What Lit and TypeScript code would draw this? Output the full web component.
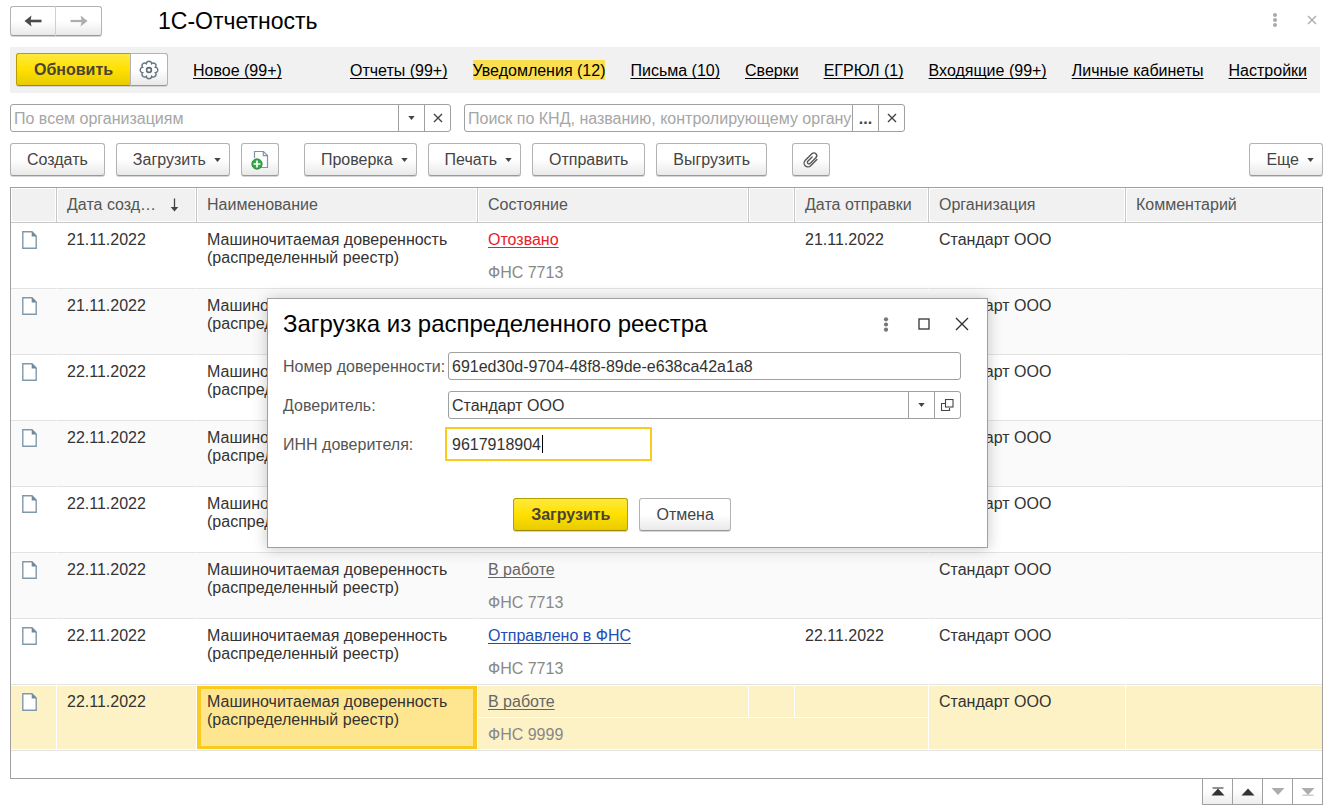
import { LitElement, html, svg, css, nothing } from "lit";
import { customElement, state } from "lit/decorators.js";
import { classMap } from "lit/directives/class-map.js";

type Tone = "revoked" | "working" | "sent";

interface Notice {
  created: string;
  name: string;
  status: string;
  tone: Tone;
  office: string;
  sent: string;
  company: string;
}

const NAME = "Машиночитаемая доверенность (распределенный реестр)";
const notice = (created: string, status: string, tone: Tone, office: string, sent = ""): Notice => ({
  created,
  name: NAME,
  status,
  tone,
  office,
  sent,
  company: "Стандарт ООО",
});

const NOTICES: Notice[] = [
  notice("21.11.2022", "Отозвано", "revoked", "ФНС 7713", "21.11.2022"),
  notice("21.11.2022", "В работе", "working", "ФНС 7713"),
  notice("22.11.2022", "В работе", "working", "ФНС 7713"),
  notice("22.11.2022", "В работе", "working", "ФНС 7713"),
  notice("22.11.2022", "В работе", "working", "ФНС 7713"),
  notice("22.11.2022", "В работе", "working", "ФНС 7713"),
  notice("22.11.2022", "Отправлено в ФНС", "sent", "ФНС 7713", "22.11.2022"),
  notice("22.11.2022", "В работе", "working", "ФНС 9999"),
];

const SECTIONS = [
  "Отчеты (99+)",
  "Уведомления (12)",
  "Письма (10)",
  "Сверки",
  "ЕГРЮЛ (1)",
  "Входящие (99+)",
  "Личные кабинеты",
  "Настройки",
];

/* Outline of the settings flower: eight round petals about a centre. */
const petals = (() => {
  const at = (i: number) => {
    const a = ((i * 45 + 22.5) * Math.PI) / 180;
    return `${(10 + 6.9 * Math.cos(a)).toFixed(2)} ${(10 + 6.9 * Math.sin(a)).toFixed(2)}`;
  };
  let d = `M${at(0)}`;
  for (let i = 1; i <= 8; i++) d += `A2.65 2.65 0 0 1 ${at(i)}`;
  return d + "Z";
})();

const icon = (w: number, h: number, body: unknown) =>
  html`<svg width=${w} height=${h} viewBox="0 0 ${w} ${h}" fill="none" aria-hidden="true">${body}</svg>`;

const icons = {
  back: icon(18, 12, svg`<path d="M17.5 6H3" stroke="#4a4a4a" stroke-width="2.6"/><path d="M0.5 6L7.5 0.5L6.5 6L7.5 11.5Z" fill="#4a4a4a"/>`),
  forward: icon(18, 12, svg`<path d="M0.5 6H15" stroke="#adadad" stroke-width="2.2"/><path d="M17.5 6L10.5 0.5L11.8 6L10.5 11.5Z" fill="#adadad"/>`),
  gear: icon(20, 20, svg`<path d=${petals} stroke="#697882" stroke-width="1.4"/><circle cx="10" cy="10" r="2.4" stroke="#5c6a74" stroke-width="1.6"/>`),
  caret: icon(7, 4, svg`<path d="M0.3 0H6.7L3.5 4Z" fill="#444"/>`),
  cross: icon(10, 10, svg`<path d="M1 1L9 9M9 1L1 9" stroke="#444" stroke-width="1.4"/>`),
  paleCross: icon(10, 10, svg`<path d="M1 1L9 9M9 1L1 9" stroke="#b0b0b0" stroke-width="1.5"/>`),
  bigCross: icon(14, 14, svg`<path d="M1 1L13 13M13 1L1 13" stroke="#333" stroke-width="1.4"/>`),
  square: icon(12, 12, svg`<rect x="1" y="1" width="10" height="10" stroke="#333" stroke-width="1.3"/>`),
  paleDots: icon(6, 14, svg`<g fill="#aaa"><circle cx="3" cy="2" r="2"/><circle cx="3" cy="7" r="2"/><circle cx="3" cy="12" r="2"/></g>`),
  dots: icon(6, 15, svg`<g fill="#777"><circle cx="3" cy="2.3" r="2.1"/><circle cx="3" cy="7.5" r="2.1"/><circle cx="3" cy="12.7" r="2.1"/></g>`),
  open: icon(13, 13, svg`<path d="M4 4.5H0.5V11.5H8.5V9" stroke="#444" stroke-width="1.1"/><rect x="4.5" y="0.5" width="7.5" height="7.5" stroke="#444" stroke-width="1.1"/>`),
  addFile: icon(18, 20, svg`<path d="M3.5 8V1.5H12.5L16.5 5.5V17.5H9" stroke="#7f95a4" stroke-width="1.2" fill="#fff"/><path d="M12.3 1.5V5.7H16.5" stroke="#7f95a4" stroke-width="1.2"/><circle cx="6" cy="14" r="5.2" fill="#35a845" stroke="#21883a" stroke-width="0.8"/><path d="M6 10.6V17.4M2.6 14H9.4" stroke="#fff" stroke-width="1.7"/>`),
  clip: icon(18, 18, svg`<g transform="rotate(45 9 9)" stroke="#555" stroke-width="1.4" stroke-linecap="round"><path d="M12.8 4.5V13.2A3.8 4 0 0 1 5.2 13.2V4A2.8 2.9 0 0 1 10.8 4V12.4A1.7 1.8 0 0 1 7.6 12.4V6"/></g>`),
  sort: icon(9, 14, svg`<path d="M4.5 0.5V11" stroke="#444" stroke-width="1.3"/><path d="M0.7 9H8.3L4.5 13.5Z" fill="#444"/>`),
  page: icon(15, 18, svg`<path d="M0.8 0.8H10L14.2 5V17.2H0.8Z" fill="#fff" stroke="#8099aa" stroke-width="1.4"/><path d="M9.7 0.5L14.7 5.5H9.7Z" fill="#6f899b"/>`),
  first: icon(14, 9, svg`<path d="M1.5 1H12.5" stroke="#555" stroke-width="1.3"/><path d="M0.5 8.5L7 1.5L13.5 8.5Z" fill="#333"/>`),
  prev: icon(14, 9, svg`<path d="M0.5 8.5L7 1.5L13.5 8.5Z" fill="#333"/>`),
  next: icon(14, 9, svg`<path d="M0.5 1L13.5 1L7 8Z" fill="#adadad"/>`),
  last: icon(14, 9, svg`<path d="M0.5 1L13.5 1L7 8Z" fill="#adadad"/><path d="M1.5 8.2H12.5" stroke="#c4c4c4" stroke-width="1.3"/>`),
};

@customElement("app-root")
export class AppRoot extends LitElement {
  @state() private section = "Уведомления (12)";
  @state() private selected = NOTICES.length - 1;
  @state() private dialogOpen = true;

  static styles = css`
    :host {
      display: block;
      font: 16px/18px "Liberation Sans", Arial, sans-serif;
      color: #333;
      background: #fff;
    }
    * { box-sizing: border-box; }
    svg { display: block; flex: none; }
    button, input { font: inherit; color: inherit; margin: 0; }
    .page {
      position: relative;
      display: flex;
      flex-direction: column;
      min-height: 100vh;
      padding: 6px 8px 6px 10px;
    }
    .button {
      display: inline-flex;
      align-items: center;
      justify-content: center;
      height: 33px;
      padding: 0 16px;
      border: 1px solid #b3b3b3;
      border-bottom-color: #999;
      border-radius: 3px;
      background: linear-gradient(#fff 50%, #e9e9e9);
      box-shadow: 0 1px #d4d4d4;
      color: #444;
      white-space: nowrap;
    }
    .drop { gap: 8px; padding-right: 8px; }
    .square { width: 38px; padding: 0; }
    .primary {
      padding: 0 17px;
      font-weight: bold;
      color: #4a4436;
      border-color: #b89f00;
      border-bottom-color: #a08a00;
      background: linear-gradient(#ffe93e, #ffe000 50%, #e8cb00);
    }
    .plain {
      display: flex;
      align-items: center;
      justify-content: center;
      padding: 0;
      border: 0;
      background: none;
    }

    .top { display: flex; align-items: center; height: 30px; margin-bottom: 11px; }
    .history { display: flex; }
    .history .button { width: 46px; height: 30px; padding: 0; }
    .history .button:first-child { border-radius: 3px 0 0 3px; border-right-color: #d0d0d0; }
    .history .button:last-child { border-left: 0; border-radius: 0 3px 3px 0; }
    h1, h2 { margin: 0; font-weight: normal; color: #000; line-height: 28px; }
    h1 { flex: 1; margin-left: 56px; font-size: 23px; }
    .window-tools { display: flex; gap: 23px; margin: 0 4px 2px 0; }
    .window-tools .plain, .dialog-tools .plain { width: 14px; }

    .sections {
      display: flex;
      align-items: center;
      gap: 25px;
      height: 46px;
      margin: 0 3px 11px 0;
      padding: 0 13px 1px 6px;
      background: #f1f1f1;
    }
    .refresh { display: flex; }
    .refresh .primary { width: 114px; border-right: 0; border-radius: 3px 0 0 3px; }
    .refresh .square { border-radius: 0 3px 3px 0; }
    .section {
      padding-top: 2px;
      color: #000;
      text-decoration: underline;
      text-decoration-skip-ink: none;
      text-decoration-thickness: 1px;
      text-underline-offset: 2px;
      white-space: nowrap;
    }
    .section.spread { margin-right: auto; }
    .section.current { background: #fbdf4f; text-decoration: none; }

    .filters { display: flex; gap: 13px; margin-bottom: 11px; }
    .field {
      display: flex;
      height: 28px;
      border: 1px solid #a0a0a0;
      border-radius: 3px;
      background: #fff;
    }
    .filters .field { width: 441px; }
    .field input {
      flex: 1;
      min-width: 0;
      border: 0;
      padding: 2px 0 0 3px;
      background: none;
      outline: none;
    }
    .field input::placeholder { color: #a6a6a6; opacity: 1; }
    .field .plain { width: 26px; border-left: 1px solid #a0a0a0; }
    .dots-text { align-items: flex-end; padding-bottom: 3px; font-weight: bold; color: #444; }

    .commands { display: flex; gap: 11px; margin-bottom: 11px; }
    .gap { margin-right: 14px; }
    .more { margin-left: auto; }

    .list { flex: 1; border: 1px solid #a0a0a0; }
    table { width: 100%; table-layout: fixed; border-collapse: separate; border-spacing: 0; }
    .c-icon { width: 46px; }
    .c-created { width: 140px; }
    .c-name { width: 281px; }
    .c-state { width: 271px; }
    .c-sent { width: 134px; }
    .c-company { width: 197px; }
    th {
      height: 35px;
      padding: 0 10px;
      border-right: 1px solid #c8c8c8;
      border-bottom: 1px solid #c8c8c8;
      background: #f1f1f1;
      box-shadow: inset 0 0 0 1px #fff;
      font-weight: normal;
      color: #555;
      text-align: left;
      white-space: nowrap;
    }
    th:last-child { border-right: 0; }
    .sorted { display: flex; align-items: center; justify-content: space-between; padding-right: 7px; }
    td {
      height: 33px;
      padding: 8px 10px 0;
      border-right: 1px solid transparent;
      border-bottom: 1px solid #e3e3e3;
      vertical-align: top;
    }
    .line td:last-child { border-right: 0; }
    .line td.half { border-bottom-color: transparent; }
    tbody:nth-of-type(even) td { background: #fafafa; background-clip: border-box; }
    td.mark { padding-left: 11px; }
    td.office { color: #888; }
    .status {
      text-decoration: underline;
      text-decoration-skip-ink: none;
      text-decoration-thickness: 1px;
      text-underline-offset: 2px;
    }
    .revoked { color: #e6212a; }
    .working { color: #666; }
    .sent { color: #1f4fb5; }

    tbody.selected td {
      border-right-color: #fff;
      background: #fdf2c6;
      background-clip: padding-box;
      box-shadow: inset 0 1px #fff, inset 0 -1px #fff;
    }
    tbody.selected td.half { border-bottom-color: #fff; box-shadow: inset 0 1px #fff; }
    tbody.selected td.office { box-shadow: inset 0 -1px #fff; }
    tbody.selected td.cursor {
      background: #fee590;
      box-shadow: inset 0 1px #fff, inset 0 -1px #fff, inset 0 0 0 4px #facb1c;
    }

    .pager { display: flex; align-self: flex-end; margin-top: -1px; border: 1px solid #a0a0a0; }
    .pager .plain { width: 30px; height: 25px; border-left: 1px solid #a0a0a0; background: linear-gradient(#fff 40%, #eee); }
    .pager .plain:first-child { width: 29px; border-left: 0; }
    .pager .plain:disabled { background: #fff; }

    .dialog {
      position: absolute;
      top: 298px;
      left: 267px;
      width: 721px;
      margin: 0;
      padding: 10px 26px 16px 15px;
      border: 1px solid #a0a0a0;
      background: #fff;
      box-shadow: 0 1px 14px rgba(0, 0, 0, 0.22);
    }
    .dialog-top { display: flex; align-items: center; height: 30px; margin-bottom: 13px; }
    h2 { flex: 1; font-size: 24px; }
    .dialog-tools { display: flex; align-items: center; gap: 24px; margin-right: -8px; }
    .form { display: grid; grid-template-columns: 165px 1fr; row-gap: 11px; align-items: center; color: #333; }
    .form label { padding-top: 2px; color: #555; white-space: nowrap; }
    .field.active {
      width: 207px;
      height: 34px;
      margin: -3px 0 -3px -3px;
      border: 2px solid #facb1c;
      border-radius: 0;
    }
    .field.active input {
      padding-left: 5px;
      caret-color: transparent;
      background: linear-gradient(#000, #000) 95px 50% / 1px 18px no-repeat;
    }
    .actions { display: flex; justify-content: center; gap: 11px; margin-top: 40px; }
  `;

  private renderNotice(item: Notice, index: number) {
    const chosen = index === this.selected;
    return html`
      <tbody class=${classMap({ selected: chosen })} @click=${() => (this.selected = index)}>
        <tr class="line">
          <td class="mark" rowspan="2">${icons.page}</td>
          <td rowspan="2">${item.created}</td>
          <td class=${classMap({ cursor: chosen })} rowspan="2">${item.name}</td>
          <td class="half"><a class="status ${item.tone}" href="#">${item.status}</a></td>
          <td class="half"></td>
          <td class="half">${item.sent || nothing}</td>
          <td rowspan="2">${item.company}</td>
          <td rowspan="2"></td>
        </tr>
        <tr>
          <td class="office" colspan="3">${item.office}</td>
        </tr>
      </tbody>
    `;
  }

  private renderDialog() {
    const close = () => (this.dialogOpen = false);
    return html`
      <section class="dialog" role="dialog" aria-labelledby="dialog-title">
        <div class="dialog-top">
          <h2 id="dialog-title">Загрузка из распределенного реестра</h2>
          <div class="dialog-tools">
            <button class="plain" aria-label="Меню">${icons.dots}</button>
            <button class="plain" aria-label="Развернуть">${icons.square}</button>
            <button class="plain" aria-label="Закрыть" @click=${close}>${icons.bigCross}</button>
          </div>
        </div>
        <div class="form">
          <label for="number">Номер доверенности:</label>
          <div class="field"><input id="number" .value=${"691ed30d-9704-48f8-89de-e638ca42a1a8"} /></div>
          <label for="principal">Доверитель:</label>
          <div class="field">
            <input id="principal" .value=${"Стандарт ООО"} />
            <button class="plain" aria-label="Выбрать">${icons.caret}</button>
            <button class="plain" aria-label="Открыть">${icons.open}</button>
          </div>
          <label for="inn">ИНН доверителя:</label>
          <div class="field active"><input id="inn" .value=${"9617918904"} /></div>
        </div>
        <div class="actions">
          <button class="button primary">Загрузить</button>
          <button class="button" @click=${close}>Отмена</button>
        </div>
      </section>
    `;
  }

  render() {
    return html`
      <main class="page">
        <header class="top">
          <div class="history">
            <button class="button" aria-label="Назад">${icons.back}</button>
            <button class="button" aria-label="Вперед">${icons.forward}</button>
          </div>
          <h1>1С-Отчетность</h1>
          <div class="window-tools">
            <button class="plain" aria-label="Меню">${icons.paleDots}</button>
            <button class="plain" aria-label="Закрыть">${icons.paleCross}</button>
          </div>
        </header>

        <nav class="sections">
          <div class="refresh">
            <button class="button primary">Обновить</button>
            <button class="button square" aria-label="Настройка">${icons.gear}</button>
          </div>
          <a class="section spread" href="#">Новое (99+)</a>
          ${SECTIONS.map(
            (name) => html`<a
              class=${classMap({ section: true, current: name === this.section })}
              href="#"
              @click=${() => (this.section = name)}
              >${name}</a
            >`
          )}
        </nav>

        <div class="filters">
          <div class="field">
            <input aria-label="Организация" placeholder="По всем организациям" />
            <button class="plain" aria-label="Выбрать">${icons.caret}</button>
            <button class="plain" aria-label="Очистить">${icons.cross}</button>
          </div>
          <div class="field">
            <input aria-label="Поиск" placeholder="Поиск по КНД, названию, контролирующему органу" />
            <button class="plain dots-text">...</button>
            <button class="plain" aria-label="Очистить">${icons.cross}</button>
          </div>
        </div>

        <div class="commands">
          <button class="button">Создать</button>
          <button class="button drop">Загрузить ${icons.caret}</button>
          <button class="button square gap" aria-label="Создать из файла">${icons.addFile}</button>
          <button class="button drop">Проверка ${icons.caret}</button>
          <button class="button drop">Печать ${icons.caret}</button>
          <button class="button">Отправить</button>
          <button class="button gap">Выгрузить</button>
          <button class="button square" aria-label="Вложения">${icons.clip}</button>
          <button class="button drop more">Еще ${icons.caret}</button>
        </div>

        <div class="list">
          <table>
            <colgroup>
              <col class="c-icon" />
              <col class="c-created" />
              <col class="c-name" />
              <col class="c-state" />
              <col class="c-icon" />
              <col class="c-sent" />
              <col class="c-company" />
              <col />
            </colgroup>
            <thead>
              <tr>
                <th></th>
                <th><div class="sorted">Дата созд… ${icons.sort}</div></th>
                <th>Наименование</th>
                <th>Состояние</th>
                <th></th>
                <th>Дата отправки</th>
                <th>Организация</th>
                <th>Комментарий</th>
              </tr>
            </thead>
            ${NOTICES.map((item, index) => this.renderNotice(item, index))}
          </table>
        </div>

        <div class="pager">
          <button class="plain" aria-label="В начало">${icons.first}</button>
          <button class="plain" aria-label="Назад">${icons.prev}</button>
          <button class="plain" aria-label="Вперед" disabled>${icons.next}</button>
          <button class="plain" aria-label="В конец" disabled>${icons.last}</button>
        </div>

        ${this.dialogOpen ? this.renderDialog() : nothing}
      </main>
    `;
  }
}
